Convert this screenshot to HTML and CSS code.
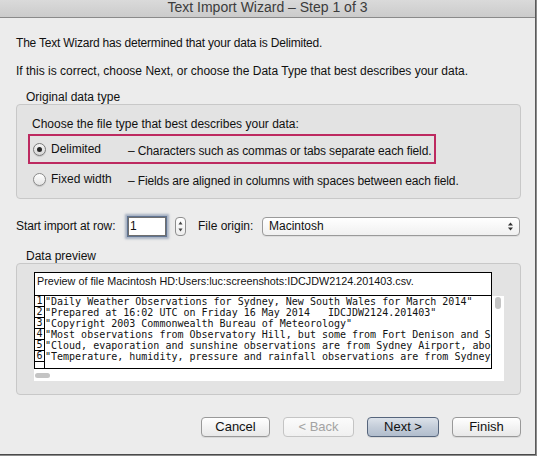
FILE: index.html
```html
<!DOCTYPE html>
<html>
<head>
<meta charset="utf-8">
<title>Text Import Wizard</title>
<link rel="stylesheet" href="styles.css">
</head>
<body>
<div class="window">
  <div class="titlebar">Text Import Wizard – Step 1 of 3</div>
  <div class="content">
    <p class="intro first">The Text Wizard has determined that your data is Delimited.</p>
    <p class="intro">If this is correct, choose Next, or choose the Data Type that best describes your data.</p>

    <div class="group-label">Original data type</div>
    <div class="group type-group">
      <div class="group-heading">Choose the file type that best describes your data:</div>
      <div class="option highlighted">
        <span class="radio checked"></span>
        <span class="opt-label">Delimited</span>
        <span class="opt-desc">– Characters such as commas or tabs separate each field.</span>
      </div>
      <div class="option">
        <span class="radio"></span>
        <span class="opt-label">Fixed width</span>
        <span class="opt-desc">– Fields are aligned in columns with spaces between each field.</span>
      </div>
    </div>

    <div class="import-row">
      <span class="row-label">Start import at row:</span>
      <span class="textfield">1</span>
      <span class="stepper">
        <svg width="11" height="19" viewBox="0 0 11 19">
          <path d="M3.5 7.5 L5.5 4.5 L7.5 7.5 Z" fill="#444"/>
          <path d="M3.5 11.5 L5.5 14.5 L7.5 11.5 Z" fill="#444"/>
        </svg>
      </span>
      <span class="origin-label">File origin:</span>
      <span class="popup">
        <span class="popup-value">Macintosh</span>
        <svg class="popup-arrows" width="7" height="11" viewBox="0 0 7 11">
          <path d="M1 4.5 L3.5 1.5 L6 4.5 Z" fill="#333"/>
          <path d="M1 6.5 L3.5 9.5 L6 6.5 Z" fill="#333"/>
        </svg>
      </span>
    </div>

    <div class="group-label">Data preview</div>
    <div class="group preview-group">
      <div class="preview-head">Preview of file Macintosh HD:Users:luc:screenshots:IDCJDW2124.201403.csv.</div>
      <div class="scroller">
        <div class="rows">
          <div class="row"><span class="num">1</span><span class="line">"Daily Weather Observations for Sydney, New South Wales for March 2014"</span></div>
          <div class="row"><span class="num">2</span><span class="line">"Prepared at 16:02 UTC on Friday 16 May 2014   IDCJDW2124.201403"</span></div>
          <div class="row"><span class="num">3</span><span class="line">"Copyright 2003 Commonwealth Bureau of Meteorology"</span></div>
          <div class="row"><span class="num">4</span><span class="line">"Most observations from Observatory Hill, but some from Fort Denison and S</span></div>
          <div class="row"><span class="num">5</span><span class="line">"Cloud, evaporation and sunshine observations are from Sydney Airport, abo</span></div>
          <div class="row"><span class="num">6</span><span class="line">"Temperature, humidity, pressure and rainfall observations are from Sydney</span></div>
          <div class="row"><span class="num"></span><span class="line"></span></div>
        </div>
        <div class="vbar"><span class="vthumb"></span></div>
        <div class="hbar"><span class="hthumb"></span></div>
        <div class="corner"></div>
      </div>
    </div>

    <div class="buttons">
      <button class="btn cancel">Cancel</button>
      <button class="btn back" disabled>&lt; Back</button>
      <button class="btn next">Next &gt;</button>
      <button class="btn finish">Finish</button>
    </div>
  </div>
</div>
</body>
</html>
```

FILE: styles.css
```css
* { box-sizing: border-box; }
html, body { margin: 0; padding: 0; }
body {
  width: 537px;
  height: 456px;
  overflow: hidden;
  background: #8c8c8c;
  font-family: "Liberation Sans", Arial, sans-serif;
  font-size: 12px;
  color: #111;
}
.window {
  width: 536px;
  height: 455px;
  background: #ececec;
  border-right: 1px solid #5a5a5a;
  border-bottom: 1px solid #4a4a4a;
  display: flex;
  flex-direction: column;
}
.titlebar {
  height: 18px;
  flex: none;
  background: linear-gradient(#dadada, #cbcbcb);
  border-bottom: 1px solid #8a8a8a;
  font-size: 14px;
  line-height: 14px;
  text-align: center;
  color: #3c3c3c;
}
.content {
  flex: 1;
  display: flex;
  flex-direction: column;
  padding: 0 14px 0 16px;
}
.intro { margin: 0; line-height: 16px; white-space: nowrap; }
.intro.first { margin-top: 17px; letter-spacing: -0.2px; }
.intro + .intro { margin-top: 12px; }
.group-label {
  margin-top: 11px;
  padding-left: 10px;
  line-height: 14px;
}
.group {
  background: #e3e3e3;
  border: 1px solid #c8c8c8;
  border-radius: 4px;
}
.type-group { padding: 11px 0 4px 11px; }
.group-heading {
  line-height: 16px;
  padding-left: 4px;
  margin-bottom: 2px;
}
.option {
  display: flex;
  align-items: center;
  width: 408px;
  height: 30px;
  border: 2px solid transparent;
  padding-left: 3px;
}
.option.highlighted { border-color: #bd2a60; }
.radio {
  width: 13px;
  height: 13px;
  border-radius: 50%;
  border: 1px solid #8a8a8a;
  background: linear-gradient(#ffffff, #e4e4e4);
  box-shadow: 0 1px 1px rgba(0,0,0,0.12);
  display: flex;
  align-items: center;
  justify-content: center;
  flex: none;
}
.radio.checked { border-color: #7a7a7a; background: linear-gradient(#f4f4f4, #d6d6d6); }
.radio.checked::after {
  content: "";
  width: 5px;
  height: 5px;
  border-radius: 50%;
  background: #262626;
}
.opt-label { margin-left: 5px; width: 77px; flex: none; }
.opt-desc { padding-top: 4px; white-space: nowrap; letter-spacing: -0.12px; }

.import-row {
  display: flex;
  align-items: center;
  height: 24px;
  margin-top: 15px;
}
.row-label { width: 112px; flex: none; white-space: nowrap; letter-spacing: -0.1px; }
.textfield {
  width: 38px;
  height: 19px;
  flex: none;
  background: #fff;
  border: 1px solid #6f6f6f;
  padding-left: 1px;
  line-height: 17px;
  font-size: 12px;
  box-shadow: 0 0 0 1px rgba(90,110,140,0.9), 0 0 2px 3px rgba(110,130,160,0.55);
}
.stepper {
  margin-left: 9px;
  width: 11px;
  height: 19px;
  flex: none;
  border: 1px solid #8e8e8e;
  border-radius: 4px;
  background: linear-gradient(#ffffff, #ededed);
  display: flex;
  align-items: center;
  justify-content: center;
  overflow: hidden;
}
.stepper svg { flex: none; }
.origin-label { margin-left: 12px; width: 64px; flex: none; white-space: nowrap; }
.popup {
  width: 258px;
  height: 19px;
  flex: none;
  display: flex;
  align-items: center;
  justify-content: space-between;
  padding: 0 5px 0 6px;
  border: 1px solid #9a9a9a;
  border-radius: 4px;
  background: linear-gradient(#ffffff, #f0f0f0);
  box-shadow: 0 1px 0 rgba(0,0,0,0.06);
}

.preview-group { padding: 8px 0 13px 17px; }
.preview-head {
  width: 458px;
  height: 24px;
  background: #fff;
  border: 1px solid #000;
  padding: 0 0 0 2px;
  line-height: 16px;
  font-size: 10.8px;
  white-space: nowrap;
  overflow: hidden;
}
.scroller {
  width: 470px;
  display: grid;
  grid-template-columns: 458px 12px;
  grid-template-rows: 73px 12px;
  background: #fff;
}
.rows {
  border: 1px solid #000;
  border-top: none;
  overflow: hidden;
  font-family: "DejaVu Sans Mono", "Liberation Mono", monospace;
  font-size: 10px;
  color: #111;
}
.row { display: flex; height: 11px; line-height: 11px; }
.num {
  width: 10px;
  flex: none;
  border-right: 1px solid #000;
  border-bottom: 1px solid #000;
  text-align: center;
  line-height: 10px;
}
.line { white-space: pre; }
.vthumb {
  display: block;
  margin: 1px 0 0 3px;
  width: 6px;
  height: 12px;
  border-radius: 3px;
  background: #c4c4c4;
}
.hbar { display: flex; align-items: center; }
.hthumb {
  display: block;
  margin-left: 1px;
  width: 15px;
  height: 5px;
  border-radius: 3px;
  background: #c4c4c4;
}

.buttons {
  display: flex;
  justify-content: flex-end;
  gap: 13px;
  margin-top: 22px;
}
.btn {
  height: 20px;
  margin: 0;
  padding: 0;
  font-family: "Liberation Sans", Arial, sans-serif;
  font-size: 13px;
  line-height: 18px;
  color: #111;
  border: 1px solid #999;
  border-radius: 4px;
  background: linear-gradient(#ffffff, #f3f3f3 50%, #e8e8e8);
  box-shadow: 0 1px 0 rgba(0,0,0,0.08);
}
.cancel { width: 69px; }
.back { width: 71px; color: #a3a3a3; border-color: #c4c4c4; background: linear-gradient(#fbfbfb, #f0f0f0); box-shadow: none; }
.next {
  width: 72px;
  border-color: #56657c;
  background: linear-gradient(#dce2ea, #c4cdd9 50%, #b1bdcd);
}
.finish { width: 69px; }
```
